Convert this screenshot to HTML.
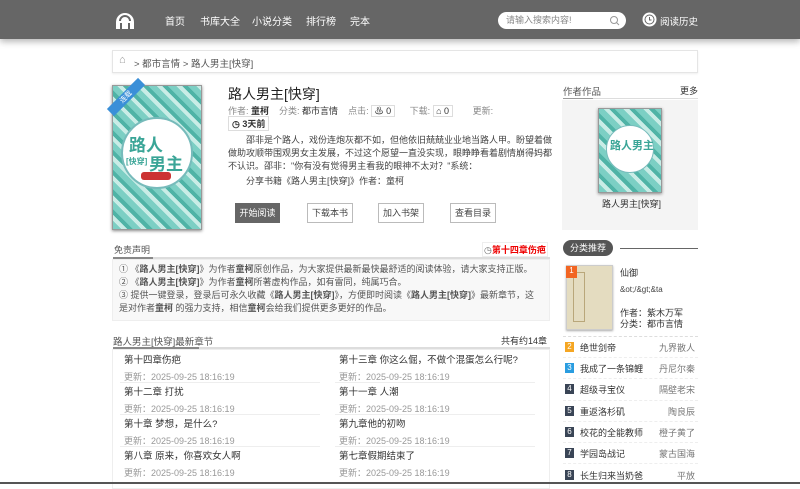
<!DOCTYPE html><html><head><meta charset="utf-8"><style>
*{margin:0;padding:0;box-sizing:border-box}
body{width:800px;height:484px;overflow:hidden;background:#fff;font-family:"Liberation Sans","Noto Sans CJK SC",sans-serif;font-size:9px;color:#333;position:relative}
.a{position:absolute}
.hd{left:0;top:0;width:800px;height:39px;background:#666;box-shadow:0 3px 6px #bbb}
.nav span{position:absolute;top:13px;color:#fff;font-size:10px}
.gray{color:#888}
.btn{position:absolute;top:203px;height:20px;border:1px solid #bbb;font-size:9px;text-align:center;line-height:18px;color:#444;background:#fff}
.cover{background:repeating-linear-gradient(45deg,#7ccfc4 0 6px,#c9ece6 6px 10px,#4fb3a6 10px 14px);border:1px solid #999;box-shadow:0 1px 3px #888;overflow:hidden}
.ch{position:absolute;font-size:9.5px;color:#333}
.dt{position:absolute;font-size:9px;color:#999}
.rk{position:absolute;left:565px;width:9px;height:10px;color:#fff;font-size:8px;text-align:center;line-height:10px}
</style></head><body>
<div class="a hd"></div>
<svg class="a" style="left:114px;top:10px" width="22" height="20" viewBox="0 0 22 20"><path d="M2 12a9 9 0 0 1 18 0v7h-4v-6h-2v6h-6v-6h-2v6h-4z" fill="#fff"/><path d="M6 11a5 5 0 0 1 10 0" stroke="#666" stroke-width="2" fill="none"/></svg>
<div class="nav"><span style="left:165px">首页</span><span style="left:200px">书库大全</span><span style="left:252px">小说分类</span><span style="left:306px">排行榜</span><span style="left:350px">完本</span></div>
<div class="a" style="left:498px;top:12px;width:128px;height:17px;background:#fff;border-radius:9px;color:#888;font-size:9px;line-height:17px;padding-left:8px">请输入搜索内容!</div>
<svg class="a" style="left:609px;top:15px" width="11" height="11"><circle cx="5" cy="5" r="3.5" stroke="#999" fill="none"/><path d="M7.5 7.5L10 10" stroke="#999"/></svg>
<svg class="a" style="left:642px;top:12px" width="15" height="15"><circle cx="7.5" cy="7.5" r="7" fill="#fff"/><circle cx="7.5" cy="7.5" r="4.5" stroke="#666" fill="none"/><path d="M7.5 5v3h2" stroke="#666" fill="none"/></svg>
<span class="a" style="left:660px;top:14px;color:#fff;font-size:9.5px">阅读历史</span>

<div class="a" style="left:112px;top:50px;width:586px;height:23px;border:1px solid #e5e5e5;box-shadow:0 1px 2px #eee"></div>
<span class="a" style="left:119px;top:54px;color:#999;font-size:11px">⌂</span>
<span class="a" style="left:134px;top:56px;color:#555;font-size:9.5px">&gt; 都市言情 &gt; 路人男主[快穿]</span>

<div class="a cover" style="left:112px;top:85px;width:90px;height:145px"></div>
<div class="a" style="left:121px;top:117px;width:72px;height:72px;border-radius:50%;background:#fff;border:2px solid #7bb"></div>
<span class="a" style="left:129px;top:131px;color:#3aa597;font-size:17px;font-weight:bold">路人</span>
<span class="a" style="left:149px;top:150px;color:#3aa597;font-size:17px;font-weight:bold">男主</span>
<span class="a" style="left:126px;top:156px;color:#3aa597;font-size:8px;font-weight:bold">[快穿]</span>
<div class="a" style="left:141px;top:172px;width:30px;height:8px;background:#c33;border-radius:3px"></div>
<div class="a" style="left:104px;top:92px;width:44px;height:10px;background:#3a8fd8;transform:rotate(-45deg);color:#fff;font-size:7px;text-align:center">连载</div>

<div class="a" style="left:228px;top:84px;font-size:14px;color:#222">路人男主[快穿]</div>
<div class="a gray" style="left:228px;top:104px">作者: <b style="color:#333">童柯</b>&nbsp;&nbsp;&nbsp;&nbsp;分类: <b style="color:#333;font-weight:normal">都市言情</b>&nbsp;&nbsp;&nbsp;&nbsp;点击: <span style="border:1px solid #ddd;color:#333">&nbsp;♨ 0&nbsp;</span>&nbsp;&nbsp;&nbsp;&nbsp;&nbsp;&nbsp;下载: <span style="border:1px solid #ddd;color:#333">&nbsp;⌂ 0&nbsp;</span>&nbsp;&nbsp;&nbsp;&nbsp;&nbsp;&nbsp;&nbsp;&nbsp;更新:</div>
<div class="a" style="left:228px;top:116px;border:1px solid #ddd;padding:0 3px;font-weight:bold">◷ 3天前</div>
<div class="a" style="left:228px;top:134px;width:325px;line-height:13px;color:#444;text-indent:18px">邵非是个路人，戏份连炮灰都不如，但他依旧兢兢业业地当路人甲。盼望着做做助攻顺带围观男女主发展，不过这个愿望一直没实现，眼睁睁看着剧情崩得妈都不认识。邵非："你有没有觉得男主看我的眼神不太对？"系统：</div>
<div class="a" style="left:246px;top:174px;color:#444">分享书籍《路人男主[快穿]》作者：童柯</div>
<div class="btn" style="left:235px;width:45px;background:#666;color:#fff;border-color:#666">开始阅读</div>
<div class="btn" style="left:307px;width:46px">下载本书</div>
<div class="btn" style="left:378px;width:46px">加入书架</div>
<div class="btn" style="left:450px;width:46px">查看目录</div>

<div class="a" style="left:563px;top:84px;color:#555;font-size:9.5px">作者作品</div>
<div class="a" style="left:680px;top:84px;color:#333">更多</div>
<div class="a" style="left:563px;top:98px;width:135px;height:1px;background:#ddd"></div>
<div class="a" style="left:563px;top:98px;width:30px;height:1px;background:#999"></div>
<div class="a" style="left:562px;top:100px;width:136px;height:130px;background:#f4f4f4"></div>
<div class="a cover" style="left:598px;top:108px;width:64px;height:85px"></div>
<div class="a" style="left:606px;top:125px;width:48px;height:48px;border-radius:50%;background:#fff;border:1px solid #7bb"></div>
<span class="a" style="left:610px;top:137px;color:#3aa597;font-size:11px;font-weight:bold">路人男主</span>
<div class="a" style="left:602px;top:197px;color:#333">路人男主[快穿]</div>

<div class="a" style="left:114px;top:243px;color:#555">免责声明</div>
<div class="a" style="left:113px;top:257px;width:437px;height:2px;background:#ddd"></div>
<div class="a" style="left:113px;top:257px;width:40px;height:2px;background:#888"></div>
<div class="a" style="left:482px;top:242px;border:1px solid #eee;color:#e00;font-weight:bold;padding:0 1px"><span style="color:#666;font-weight:normal">◷</span>第十四章伤疤</div>
<div class="a" style="left:112px;top:259px;width:438px;height:62px;background:#f8f8f8;border:1px solid #eee;padding:3px 6px;line-height:13px;color:#555;font-size:9px">① 《<b>路人男主[快穿]</b>》为作者<b>童柯</b>原创作品，为大家提供最新最快最舒适的阅读体验，请大家支持正版。<br>② 《<b>路人男主[快穿]</b>》为作者<b>童柯</b>所著虚构作品，如有雷同，纯属巧合。<br>③ 提供一键登录，登录后可永久收藏《<b>路人男主[快穿]</b>》，方便即时阅读《<b>路人男主[快穿]</b>》最新章节，这是对作者<b>童柯</b> 的强力支持，相信<b>童柯</b>会给我们提供更多更好的作品。</div>

<div class="a" style="left:113px;top:334px;color:#555;font-size:9.5px">路人男主[快穿]最新章节</div>
<div class="a" style="left:501px;top:334px;color:#333">共有约14章</div>
<div class="a" style="left:113px;top:347px;width:437px;height:2px;background:#ddd"></div>
<div class="a" style="left:113px;top:347px;width:86px;height:2px;background:#888"></div>
<div class="a" style="left:112px;top:349px;width:438px;height:140px;border:1px solid #eee"></div>
<div class="ch" style="left:124px;top:352px">第十四章伤疤</div><div class="ch" style="left:339px;top:352px">第十三章 你这么倔，不做个混蛋怎么行呢?</div>
<div class="dt" style="left:124px;top:370px">更新：2025-09-25 18:16:19</div><div class="dt" style="left:339px;top:370px">更新：2025-09-25 18:16:19</div>
<div class="ch" style="left:124px;top:384px">第十二章 打扰</div><div class="ch" style="left:339px;top:384px">第十一章 人潮</div>
<div class="dt" style="left:124px;top:402px">更新：2025-09-25 18:16:19</div><div class="dt" style="left:339px;top:402px">更新：2025-09-25 18:16:19</div>
<div class="ch" style="left:124px;top:416px">第十章 梦想，是什么?</div><div class="ch" style="left:339px;top:416px">第九章他的初吻</div>
<div class="dt" style="left:124px;top:434px">更新：2025-09-25 18:16:19</div><div class="dt" style="left:339px;top:434px">更新：2025-09-25 18:16:19</div>
<div class="ch" style="left:124px;top:448px">第八章 原来，你喜欢女人啊</div><div class="ch" style="left:339px;top:448px">第七章假期结束了</div>
<div class="dt" style="left:124px;top:466px">更新：2025-09-25 18:16:19</div><div class="dt" style="left:339px;top:466px">更新：2025-09-25 18:16:19</div>
<div class="a" style="left:120px;top:382px;width:200px;height:1px;background:#eee"></div><div class="a" style="left:335px;top:382px;width:200px;height:1px;background:#eee"></div>
<div class="a" style="left:120px;top:414px;width:200px;height:1px;background:#eee"></div><div class="a" style="left:335px;top:414px;width:200px;height:1px;background:#eee"></div>
<div class="a" style="left:120px;top:446px;width:200px;height:1px;background:#eee"></div><div class="a" style="left:335px;top:446px;width:200px;height:1px;background:#eee"></div>

<div class="a" style="left:563px;top:240px;width:50px;height:16px;background:#555;border-radius:8px;color:#fff;text-align:center;line-height:16px">分类推荐</div>
<div class="a" style="left:620px;top:248px;width:78px;height:1px;background:#666"></div>
<div class="a" style="left:566px;top:265px;width:47px;height:65px;background:#e4dcc0;border:1px solid #ccc;box-shadow:0 1px 2px #aaa"></div>
<div class="a" style="left:573px;top:272px;width:12px;height:50px;border:1px solid #b9a77a"></div>
<div class="rk" style="left:566px;top:266px;width:11px;height:12px;background:#f26522">1</div>
<div class="a" style="left:620px;top:266px;color:#333">仙御</div>
<div class="a" style="left:620px;top:285px;color:#444;font-size:8px">&amp;ot;/&amp;gt;&amp;ta</div>
<div class="a" style="left:620px;top:308px;color:#333;line-height:11px">作者：紫木万军<br>分类：都市言情</div>
<div class="a" style="left:563px;top:336px;width:135px;border-top:1px dashed #ddd"></div>
<div class="rk" style="top:342px;background:#f5a623">2</div><div class="a" style="left:580px;top:341px">绝世剑帝</div><div class="a" style="left:659px;top:341px;color:#777">九界散人</div>
<div class="rk" style="top:363px;background:#2a9de0">3</div><div class="a" style="left:580px;top:362px">我成了一条锦鲤</div><div class="a" style="left:659px;top:362px;color:#777">丹尼尔秦</div>
<div class="rk" style="top:384px;background:#3a4556">4</div><div class="a" style="left:580px;top:383px">超级寻宝仪</div><div class="a" style="left:659px;top:383px;color:#777">隔壁老宋</div>
<div class="rk" style="top:406px;background:#3a4556">5</div><div class="a" style="left:580px;top:405px">重返洛杉矶</div><div class="a" style="left:668px;top:405px;color:#777">陶良辰</div>
<div class="rk" style="top:427px;background:#3a4556">6</div><div class="a" style="left:580px;top:426px">校花的全能教师</div><div class="a" style="left:659px;top:426px;color:#777">橙子黄了</div>
<div class="rk" style="top:448px;background:#3a4556">7</div><div class="a" style="left:580px;top:447px">学园岛战记</div><div class="a" style="left:659px;top:447px;color:#777">蒙古国海</div>
<div class="rk" style="top:470px;background:#3a4556">8</div><div class="a" style="left:580px;top:469px">长生归来当奶爸</div><div class="a" style="left:677px;top:469px;color:#777">平放</div>
<div class="a" style="left:563px;top:357px;width:135px;border-top:1px dashed #eee"></div>
<div class="a" style="left:563px;top:378px;width:135px;border-top:1px dashed #eee"></div>
<div class="a" style="left:563px;top:400px;width:135px;border-top:1px dashed #eee"></div>
<div class="a" style="left:563px;top:421px;width:135px;border-top:1px dashed #eee"></div>
<div class="a" style="left:563px;top:442px;width:135px;border-top:1px dashed #eee"></div>
<div class="a" style="left:563px;top:463px;width:135px;border-top:1px dashed #eee"></div>
<div class="a" style="left:0;top:482px;width:800px;height:2px;background:#555"></div>
</body></html>
